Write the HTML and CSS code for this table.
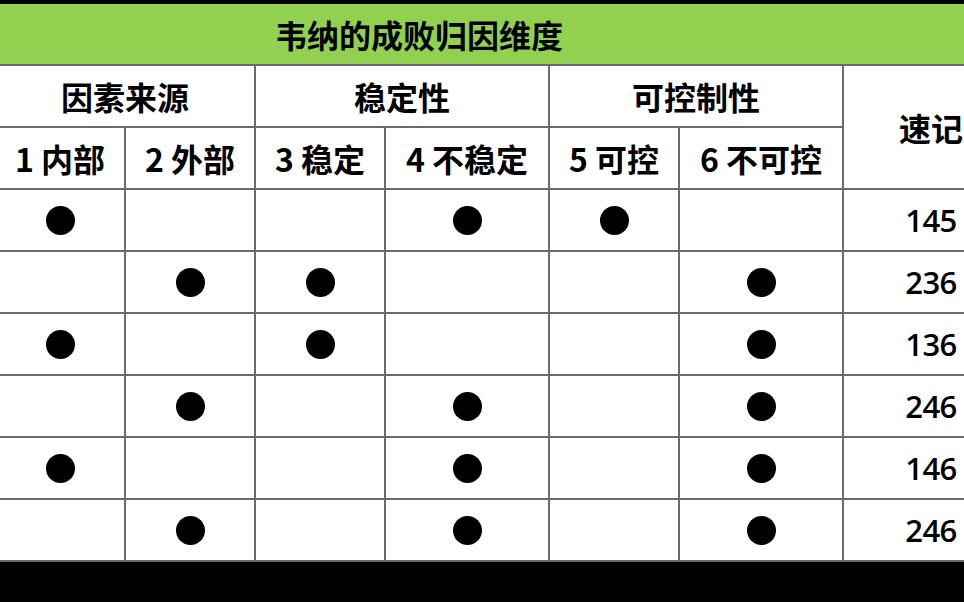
FILE: index.html
```html
<!DOCTYPE html>
<html lang="zh">
<head>
<meta charset="utf-8">
<link rel="stylesheet" href="styles.css">
<title>韦纳的成败归因维度</title>
</head>
<body>
<div class="frame">
  <table class="grid">
    <colgroup>
      <col class="c-n"><col class="c-n"><col class="c-n"><col class="c-w"><col class="c-n"><col class="c-w"><col class="c-last">
    </colgroup>
    <tr class="title-row">
      <td colspan="6" class="title">韦纳的成败归因维度</td>
      <td class="title-tail"></td>
    </tr>
    <tr class="head">
      <td colspan="2">因素来源</td>
      <td colspan="2">稳定性</td>
      <td colspan="2">可控制性</td>
      <td rowspan="2">速记</td>
    </tr>
    <tr class="head">
      <td>1 内部</td>
      <td>2 外部</td>
      <td>3 稳定</td>
      <td>4 不稳定</td>
      <td>5 可控</td>
      <td>6 不可控</td>
    </tr>
    <tr class="data">
      <td><span class="dot"></span></td><td></td><td></td><td><span class="dot"></span></td><td><span class="dot"></span></td><td></td><td class="num">145</td>
    </tr>
    <tr class="data">
      <td></td><td><span class="dot"></span></td><td><span class="dot"></span></td><td></td><td></td><td><span class="dot"></span></td><td class="num">236</td>
    </tr>
    <tr class="data">
      <td><span class="dot"></span></td><td></td><td><span class="dot"></span></td><td></td><td></td><td><span class="dot"></span></td><td class="num">136</td>
    </tr>
    <tr class="data">
      <td></td><td><span class="dot"></span></td><td></td><td><span class="dot"></span></td><td></td><td><span class="dot"></span></td><td class="num">246</td>
    </tr>
    <tr class="data">
      <td><span class="dot"></span></td><td></td><td></td><td><span class="dot"></span></td><td></td><td><span class="dot"></span></td><td class="num">146</td>
    </tr>
    <tr class="data">
      <td></td><td><span class="dot"></span></td><td></td><td><span class="dot"></span></td><td></td><td><span class="dot"></span></td><td class="num">246</td>
    </tr>
  </table>
</div>
</body>
</html>
```
FILE: styles.css
```css
html, body {
  margin: 0;
  padding: 0;
  background: #000;
  width: 964px;
  height: 602px;
  overflow: hidden;
}
.frame {
  padding-top: 4px;
  width: 964px;
  overflow: hidden;
}
.grid {
  margin-left: -6px;
  border-collapse: collapse;
  table-layout: fixed;
  width: 1024px;
  background: #fff;
  font-family: "Noto Sans CJK SC", "Noto Sans", sans-serif;
  color: #000;
}
.c-n { width: 130px; }
.c-w { width: 164px; }
.c-last { width: 176px; }
.grid td {
  border: 2px solid #6a6a6a;
  padding: 0;
  text-align: center;
  vertical-align: middle;
  height: 60px;
  line-height: 1;
}
.title-row td {
  background: #92d050;
  border-top: none;
  border-left: none;
  border-right: none;
  height: 60px;
}
.title {
  font-size: 32px;
  font-weight: 700;
}
.head td {
  font-size: 32px;
  font-weight: 700;
}
.num {
  font-family: "Open Sans", "Noto Sans CJK SC", sans-serif;
  font-size: 31px;
  font-weight: 600;
  letter-spacing: -0.5px;
}
.dot {
  display: inline-block;
  width: 29px;
  height: 29px;
  border-radius: 50%;
  background: #000;
  vertical-align: middle;
}
```
